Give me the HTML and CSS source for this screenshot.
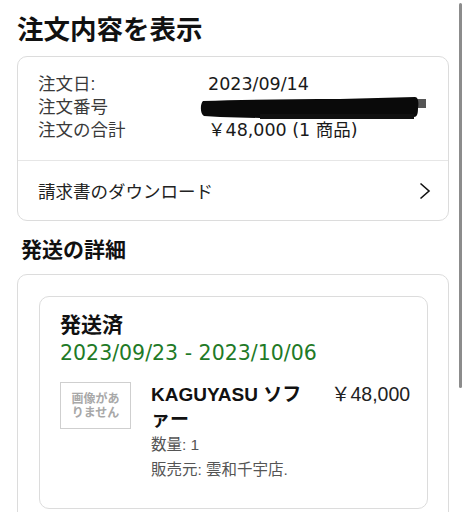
FILE: index.html
```html
<!DOCTYPE html>
<html lang="ja">
<head>
<meta charset="utf-8">
<title>注文内容を表示</title>
<link rel="stylesheet" href="styles.css">
</head>
<body>
<div class="page">
  <h1 class="title">注文内容を表示</h1>

  <section class="card summary">
    <div class="rows">
      <div class="row"><span class="label">注文日:</span><span class="value">2023/09/14</span></div>
      <div class="row"><span class="label">注文番号</span><span class="value redacted"><svg class="redact" width="228" height="26" viewBox="0 0 228 26"><path d="M217 3 L226 3 L226 12 L217 12 Z" fill="#555"/><path d="M3 5 C40 4 90 3 140 3 L215 1 C218 1 219 6 218 12 C218 18 217 21 214 21 L160 22 L60 22 L20 21 L4 20 C0 18 0 8 3 5 Z" fill="#0a0a0a"/><path d="M60 18 L214 18 L214 23 L60 23 Z" fill="#111"/></svg></span></div>
      <div class="row"><span class="label">注文の合計</span><span class="value">￥48,000 (1 商品)</span></div>
    </div>
    <div class="link-row">
      <span>請求書のダウンロード</span>
      <svg class="chev" width="12" height="18" viewBox="0 0 12 18"><polyline points="1.5,1.5 10,9 1.5,16.5" fill="none" stroke="#111" stroke-width="1.6"/></svg>
    </div>
  </section>

  <h2 class="section-title">発送の詳細</h2>

  <section class="card shipping">
    <div class="shipment">
      <div class="status">発送済</div>
      <div class="dates">2023/09/23 - 2023/10/06</div>
      <div class="item">
        <div class="thumb">画像があ<br>りません</div>
        <div class="info">
          <div class="name">KAGUYASU ソファー</div>
          <div class="meta">数量: 1</div>
          <div class="meta">販売元: 雲和千宇店.</div>
        </div>
        <div class="price">￥48,000</div>
      </div>
    </div>
  </section>
</div>
<div class="scrollbar"></div>
</body>
</html>
```
FILE: styles.css
```css
html, body {
  margin: 0;
  padding: 0;
  background: #fff;
}
body {
  font-family: "Liberation Sans", "Noto Sans CJK JP", sans-serif;
  color: #111;
  overflow: hidden;
}
.page {
  padding: 0 18px 0 17px;
}
.title {
  margin: 0;
  padding-top: 12px;
  font-size: 26.5px;
  line-height: 36px;
  font-weight: 700;
  color: #111;
}
.card {
  border: 1px solid #dcdcdc;
  border-radius: 10px;
}
.summary {
  margin-top: 8px;
}
.rows {
  padding: 16px 20px 18px 20px;
  border-bottom: 1px solid #e6e6e6;
}
.row {
  display: flex;
  font-size: 17.5px;
  line-height: 23px;
}
.label {
  width: 170px;
  color: #3a3a3a;
}
.value {
  font-family: "DejaVu Sans", "Noto Sans CJK JP", sans-serif;
  font-size: 17.5px;
  color: #1a1a1a;
}
.redacted {
  margin-left: -3px;
  height: 23px;
}
.redact {
  display: block;
}
.link-row {
  display: flex;
  align-items: center;
  justify-content: space-between;
  height: 59px;
  padding: 0 17px 0 20px;
  font-size: 17.5px;
  color: #222;
}
.chev {
  display: block;
  margin-top: 1px;
}
.section-title {
  margin: 15px 0 10px 4px;
  font-size: 21px;
  line-height: 28px;
  font-weight: 700;
  color: #111;
}
.shipping {
  padding: 21px 20px 30px 21px;
}
.shipment {
  border: 1px solid #dcdcdc;
  border-radius: 10px;
  padding: 14px 17px 26px 20px;
}
.status {
  font-size: 21px;
  line-height: 28px;
  font-weight: 700;
  color: #111;
}
.dates {
  font-family: "DejaVu Sans", "Noto Sans CJK JP", sans-serif;
  font-size: 20.5px;
  line-height: 29px;
  color: #1f7a27;
}
.item {
  display: grid;
  grid-template-columns: 71px 160px 1fr;
  column-gap: 20px;
  margin-top: 14px;
  align-items: start;
}
.thumb {
  box-sizing: border-box;
  width: 71px;
  height: 47px;
  border: 1px solid #cfcfcf;
  font-family: "Noto Sans CJK JP", sans-serif;
  font-size: 12px;
  line-height: 14px;
  font-weight: 700;
  color: #a8a8a8;
  text-align: center;
  padding-top: 8px;
}
.name {
  font-size: 19px;
  line-height: 25px;
  font-weight: 700;
  color: #111;
  line-break: loose;
}
.meta {
  font-size: 15.5px;
  line-height: 25px;
  color: #555;
}
.price {
  font-size: 19.5px;
  line-height: 25px;
  color: #222;
  white-space: nowrap;
}
.scrollbar {
  position: fixed;
  left: 459px;
  top: 3px;
  width: 3px;
  height: 385px;
  border-radius: 2px;
  background: #8c8c8c;
}
```
